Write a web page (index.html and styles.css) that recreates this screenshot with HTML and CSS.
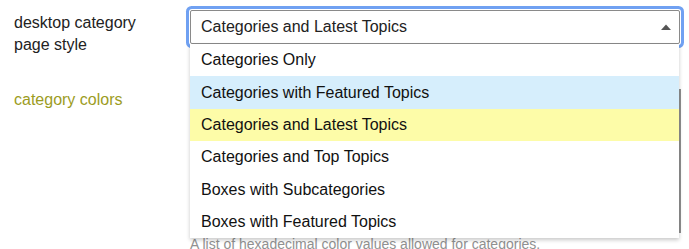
FILE: index.html
```html
<!DOCTYPE html>
<html>
<head>
<meta charset="utf-8">
<link rel="stylesheet" href="styles.css">
</head>
<body>
<div class="settings">
  <div class="setting">
    <div class="label">desktop category<br>page style</div>
    <div class="value">
      <div class="select-kit">
        <div class="select-header">
          <span class="selected-name">Categories and Latest Topics</span>
          <svg class="caret" width="10" height="6" viewBox="0 0 10 6"><path d="M0 6 L5 0.5 L10 6 Z" fill="#555"/></svg>
        </div>
        <ul class="select-body">
          <li class="option">Categories Only</li>
          <li class="option is-highlighted">Categories with Featured Topics</li>
          <li class="option is-selected">Categories and Latest Topics</li>
          <li class="option">Categories and Top Topics</li>
          <li class="option">Boxes with Subcategories</li>
          <li class="option">Boxes with Featured Topics</li>
        </ul>
      </div>
    </div>
  </div>
  <div class="setting second">
    <div class="label overridden">category colors</div>
    <div class="value">
      <div class="list-box"></div>
      <div class="desc">A list of hexadecimal color values allowed for categories.</div>
    </div>
  </div>
</div>
</body>
</html>
```

FILE: styles.css
```css
html, body {
  margin: 0;
  padding: 0;
  background: #fff;
}
body {
  font-family: "Liberation Sans", Arial, Helvetica, sans-serif;
  font-size: 16px;
  color: #222;
  width: 689px;
  height: 249px;
  overflow: hidden;
}
.settings {
  display: flex;
  flex-direction: column;
}
.setting {
  display: grid;
  grid-template-columns: 190px 490px;
}
.label {
  padding-left: 14px;
  padding-top: 12px;
  line-height: 22px;
}
.label.overridden {
  color: #9c9c1e;
  padding-top: 0;
}
.value {
  padding-top: 10px;
}
.select-kit {
  position: relative;
  width: 490px;
}
.select-header {
  box-sizing: border-box;
  height: 34px;
  border: 1px solid #8a8a8a;
  box-shadow: 0 0 0 1px #fff, 0 0 0 4px #70a1f2;
  border-radius: 2px;
  display: flex;
  align-items: center;
  justify-content: space-between;
  padding: 0 8px 0 10px;
  background: #fff;
}
.selected-name {
  line-height: 20px;
}
.caret {
  display: block;
}
.select-body {
  position: absolute;
  top: 34px;
  left: 0;
  width: 489px;
  margin: 0;
  padding: 0;
  list-style: none;
  background: #fff;
  box-shadow: 0 2px 4px rgba(0, 0, 0, 0.22);
  z-index: 2;
}
.option {
  height: 32.4px;
  display: flex;
  align-items: center;
  padding-left: 11px;
  color: #111;
}
.option.is-highlighted {
  background: #d6eefc;
}
.option.is-selected {
  background: #fdfca8;
}
.second {
  margin-top: 33px;
}
.second .value {
  padding-top: 0;
}
.list-box {
  box-sizing: border-box;
  height: 144px;
  border-right: 2px solid #8f8f8f;
  width: 491px;
}
.desc {
  font-size: 14px;
  color: #919191;
  margin-top: 2px;
  line-height: 18px;
}
```
